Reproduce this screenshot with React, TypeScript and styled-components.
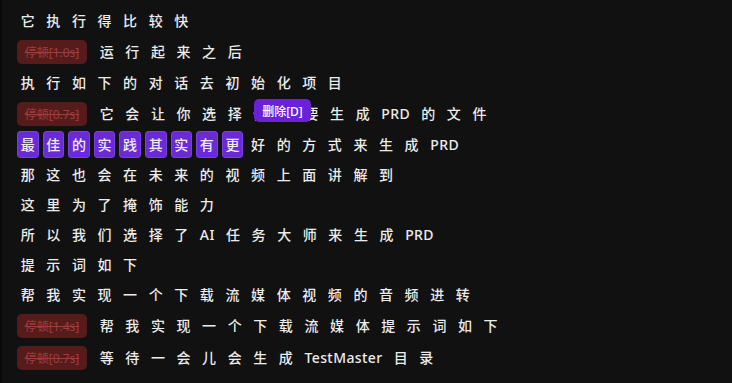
import React from 'react';
import styled, { createGlobalStyle } from 'styled-components';

const GlobalStyle = createGlobalStyle`
  html, body {
    margin: 0;
    padding: 0;
    background: #111111;
  }
`;

const Page = styled.div`
  min-height: 100vh;
  box-sizing: border-box;
  background: #111111;
  border-left: 2px solid #0a0a0a;
  padding: 7px 15px;
  font-family: 'Noto Sans', 'Noto Sans CJK SC', sans-serif;
  -webkit-font-smoothing: antialiased;
`;

const Line = styled.div<{ $pause?: boolean }>`
  position: relative;
  display: flex;
  align-items: center;
  flex-wrap: wrap;
  height: ${(props) => (props.$pause ? '29px' : '27px')};
  margin-bottom: 3px;
`;

const Word = styled.span<{ $selected?: boolean }>`
  display: inline-block;
  padding: 4px 3.5px 4px 3.7px;
  margin-right: 4px;
  border-radius: 4px;
  font-size: 14px;
  line-height: 19px;
  font-weight: 500;
  letter-spacing: 0.4px;
  color: #ececec;
  background-color: ${(props) => (props.$selected ? '#6a2ad8' : 'transparent')};
  box-shadow: ${(props) =>
    props.$selected ? 'inset 0 0 0 1px rgba(150, 100, 255, 0.35)' : 'none'};
`;

const Pause = styled.span`
  display: inline-flex;
  align-items: center;
  justify-content: center;
  width: 70px;
  height: 24px;
  margin-right: 9px;
  border-radius: 5px;
  background-color: #561c1c;
  color: #a03c3c;
  font-size: 12px;
  text-decoration: line-through;
`;

const Tooltip = styled.span`
  position: absolute;
  left: 237px;
  top: 0px;
  width: 57px;
  height: 23px;
  display: flex;
  align-items: center;
  justify-content: center;
  border-radius: 5px;
  background-color: #6a22d6;
  color: #ffffff;
  font-size: 12px;
  font-weight: 500;
  z-index: 2;
`;

type Row = {
  pause?: string;
  words: string[];
  selected?: number;
  tooltip?: string;
};

const split = (s: string) =>
  s.split(' ').filter((w) => w.length > 0);

const rows: Row[] = [
  { words: split('它 执 行 得 比 较 快') },
  { pause: '停顿[1.0s]', words: split('运 行 起 来 之 后') },
  { words: split('执 行 如 下 的 对 话 去 初 始 化 项 目') },
  {
    pause: '停顿[0.7s]',
    words: split('它 会 让 你 选 择 你 需 要 生 成 PRD 的 文 件'),
    tooltip: '删除[D]',
  },
  { words: split('最 佳 的 实 践 其 实 有 更 好 的 方 式 来 生 成 PRD'), selected: 9 },
  { words: split('那 这 也 会 在 未 来 的 视 频 上 面 讲 解 到') },
  { words: split('这 里 为 了 掩 饰 能 力') },
  { words: split('所 以 我 们 选 择 了 AI 任 务 大 师 来 生 成 PRD') },
  { words: split('提 示 词 如 下') },
  { words: split('帮 我 实 现 一 个 下 载 流 媒 体 视 频 的 音 频 进 转') },
  { pause: '停顿[1.4s]', words: split('帮 我 实 现 一 个 下 载 流 媒 体 提 示 词 如 下') },
  { pause: '停顿[0.7s]', words: split('等 待 一 会 儿 会 生 成 TestMaster 目 录') },
];

export default function App() {
  return (
    <>
      <GlobalStyle />
      <Page>
        {rows.map((row, i) => (
          <Line key={i} $pause={!!row.pause}>
            {row.pause && <Pause>{row.pause}</Pause>}
            {row.words.map((w, j) => (
              <Word key={j} $selected={row.selected !== undefined && j < row.selected}>
                {w}
              </Word>
            ))}
            {row.tooltip && <Tooltip>{row.tooltip}</Tooltip>}
          </Line>
        ))}
      </Page>
    </>
  );
}
